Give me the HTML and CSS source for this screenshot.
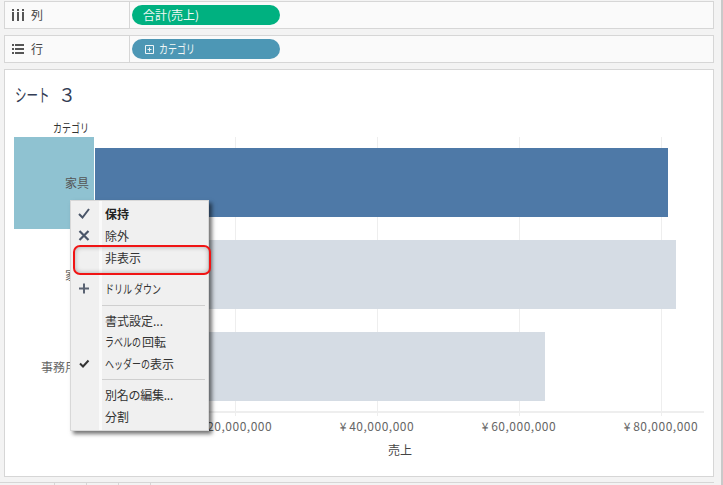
FILE: index.html
```html
<!DOCTYPE html>
<html lang="ja">
<head>
<meta charset="utf-8">
<title>シート 3</title>
<link rel="stylesheet" href="styles.css">
</head>
<body>
<div class="app">
  <div class="shelf">
    <div class="shelf-label">
      <svg class="shelf-icon" width="12" height="12" viewBox="0 0 12 12"><path fill="#555" d="M0 0h2v2H0zM5 0h2v2H5zM10 0h2v2h-2zM0 3h2v9H0zM5 3h2v9H5zM10 3h2v9h-2z"/></svg>
      <span>列</span>
    </div>
    <div class="pill pill-green">合計(売上)</div>
  </div>
  <div class="shelf">
    <div class="shelf-label">
      <svg class="shelf-icon" width="12" height="12" viewBox="0 0 12 12"><path fill="#555" d="M0 1h2v2H0zM3 1h9v2H3zM0 5h2v2H0zM3 5h9v2H3zM0 9h2v2H0zM3 9h9v2H3z"/></svg>
      <span>行</span>
    </div>
    <div class="pill pill-blue">
      <svg class="pill-icon" width="11" height="11" viewBox="0 0 11 11"><path fill="none" stroke="#eef5f8" d="M.5.5h8v8h-8zM4.5 2.5v4M2.5 4.5h4" transform="translate(1 1)"/></svg>
      <span class="kana">カテゴリ</span>
    </div>
  </div>
  <section class="sheet">
    <h1 class="title"><span class="kana title-kana">シート</span> ３</h1>
    <div class="head-label"><span class="kana kana-right">カテゴリ</span></div>
    <div class="chart">
      <div class="row-headers">
        <div class="row-header selected">家具</div>
        <div class="row-header">家電</div>
        <div class="row-header">事務用品</div>
      </div>
      <div class="plot">
        <div class="bar-row"><div class="bar bar-dark" style="width:573px"></div></div>
        <div class="bar-row"><div class="bar bar-light" style="width:581px"></div></div>
        <div class="bar-row"><div class="bar bar-light" style="width:450px"></div></div>
      </div>
    </div>
    <div class="tick-marks"></div>
    <div class="axis">
      <span class="tick">¥ 20,000,000</span>
      <span class="tick">¥ 40,000,000</span>
      <span class="tick">¥ 60,000,000</span>
      <span class="tick">¥ 80,000,000</span>
    </div>
    <div class="axis-title">売上</div>
  </section>
  <div class="tabs"><i></i><i></i><i></i><i></i></div>
</div>

<div class="menu">
  <div class="item tall bold">
    <svg class="mark" width="12" height="11" viewBox="0 0 12 11"><path fill="none" stroke="#4a5568" stroke-width="2" d="M1 6l3.5 3.5L11 1"/></svg>
    <span>保持</span>
  </div>
  <div class="item tall">
    <svg class="mark" width="12" height="11" viewBox="0 0 12 11"><path fill="none" stroke="#4a5568" stroke-width="2.2" d="M1.5 1l9 9M10.5 1l-9 9"/></svg>
    <span>除外</span>
  </div>
  <div class="item tall"><span>非表示</span></div>
  <div class="gap"></div>
  <div class="item">
    <svg class="mark" width="12" height="11" viewBox="0 0 12 11"><path fill="none" stroke="#5a6372" stroke-width="2" d="M6 .5v10M1 5.5h10"/></svg>
    <span class="kana">ドリル ダウン</span>
  </div>
  <div class="sep"></div>
  <div class="item"><span>書式設定...</span></div>
  <div class="item"><span class="kana cut4">ラベルの</span><span>回転</span></div>
  <div class="item">
    <svg class="mark" width="12" height="11" viewBox="0 0 12 11"><path fill="none" stroke="#333" stroke-width="2" d="M2 5.5l3 3L10.5 2.5"/></svg>
    <span class="kana cut5">ヘッダーの</span><span>表示</span>
  </div>
  <div class="sep"></div>
  <div class="item"><span class="name-edit">別名の編集...</span></div>
  <div class="item"><span>分割</span></div>
</div>
<div class="highlight"></div>
</body>
</html>
```
FILE: styles.css
```css
* { box-sizing: border-box; }
html, body { margin: 0; height: 100%; }
body {
  width: 723px;
  height: 485px;
  overflow: hidden;
  position: relative;
  background: #f3f3f3;
  color: #555;
  font: 12px/16px "Noto Sans CJK JP", "Noto Sans", sans-serif;
}
.app {
  height: 485px;
  padding: 1px 7px 0 4px;
  border-right: 2px solid #c9c9c9;
  width: 723px;
  display: flex;
  flex-direction: column;
  gap: 6px;
}
.kana {
  display: inline-block;
  transform: scaleX(.75);
  transform-origin: 0 50%;
  white-space: pre;
}
.kana-right { transform-origin: 100% 50%; }
.cut4 { margin-right: -11px; }
.cut5 { margin-right: -15px; }
.title-kana {
  transform: scaleX(.64);
  margin-right: -19px;
}
.name-edit { letter-spacing: -.25px; }
.shelf {
  flex: none;
  height: 28px;
  display: flex;
  align-items: center;
  background: #fafafa;
  border: 1px solid #d6d6d6;
}
.shelf-label {
  width: 125px;
  height: 100%;
  flex: none;
  display: flex;
  align-items: center;
  gap: 7px;
  padding-left: 7px;
  border-right: 1px solid #d6d6d6;
  color: #444;
}
.pill {
  margin-left: 2px;
  width: 148px;
  height: 20px;
  border-radius: 10px;
  color: #f2f8f6;
  display: flex;
  align-items: center;
  padding-left: 11px;
}
.pill-green { background: #00b180; }
.pill-blue { background: #4d97b5; }
.pill-icon { margin-right: 4px; margin-left: 1px; }
.sheet {
  flex: none;
  height: 408px;
  background: #fff;
  border: 1px solid #d6d6d6;
  padding: 0 9px;
}
.title {
  margin: 12px 0 0 1px;
  font-size: 18px;
  line-height: 24px;
  font-weight: 400;
  color: #333d55;
  white-space: pre;
  word-spacing: 4px;
}
.head-label {
  margin-top: 14px;
  width: 80px;
  height: 16px;
  padding-right: 5px;
  text-align: right;
  color: #333;
}
.chart {
  margin-top: 1px;
  display: flex;
  height: 276px;
}
.row-headers { width: 80px; flex: none; display: flex; flex-direction: column; }
.row-header {
  height: 92px;
  padding-right: 5px;
  display: flex;
  align-items: center;
  justify-content: flex-end;
  color: #666;
}
.row-header.selected { background: #8fc2d1; color: #555; }
.plot {
  margin-left: 1px;
  width: 610px;
  height: 276px;
  border-bottom: 2px solid #eeeeee;
  background-image: repeating-linear-gradient(90deg, transparent 0 141px, #eeeeee 141px 142px);
  background-size: 142px 100%;
  background-position: -1px 0;
}
.bar-row { height: 92px; padding-bottom: 2px; display: flex; align-items: center; }
.bar { height: 69px; }
.bar-dark { background: #4e79a7; }
.bar-light { background: #d5dce4; }
.tick-marks {
  margin-left: 81px;
  width: 610px;
  height: 3px;
  background-image: repeating-linear-gradient(90deg, transparent 0 141px, #eeeeee 141px 142px);
  background-size: 142px 100%;
  background-position: -1px 0;
}
.axis {
  display: flex;
  margin: 2px 0 0 150px;
  height: 16px;
}
.tick {
  flex: none;
  width: 142px;
  text-align: center;
  color: #666;
  letter-spacing: .5px;
  word-spacing: -1px;
  white-space: nowrap;
}
.axis-title {
  margin: 8px 0 0 81px;
  width: 610px;
  text-align: center;
  color: #444;
}
.tabs {
  flex: none;
  height: 0;
  display: flex;
  transform: translateY(-1px);
  border-top: 1px solid #d6d6d6;
  margin-left: -4px;
}
.tabs i { width: 32px; height: 4px; border-right: 1px solid #d6d6d6; }
.tabs i:first-child { width: 55px; }
.menu {
  position: absolute;
  left: 70px;
  top: 200px;
  width: 139px;
  height: 231px;
  padding-top: 2px;
  background: linear-gradient(90deg, #f0f0f0 0 28px, #fafafa 28px 31px, #f0f0f0 31px);
  border: 1px solid #d8d8d8;
  box-shadow: 3px 3px 4px rgba(0, 0, 0, .55);
  color: #333;
}
.item {
  position: relative;
  height: 21.5px;
  padding-left: 34px;
  line-height: 21px;
  white-space: nowrap;
}
.item.tall { height: 22px; }
.item.bold { font-weight: 700; color: #222; }
.mark { position: absolute; left: 7px; top: 5px; }
.sep { height: 1px; margin: 5px 3px 4px 31px; background: #cfcfcf; }
.gap { height: 9px; }
.highlight {
  position: absolute;
  left: 73px;
  top: 245px;
  width: 138px;
  height: 30px;
  border: 2px solid #f01414;
  border-radius: 7px;
  box-shadow: inset 0 0 5px rgba(0, 0, 0, .3);
}
```
